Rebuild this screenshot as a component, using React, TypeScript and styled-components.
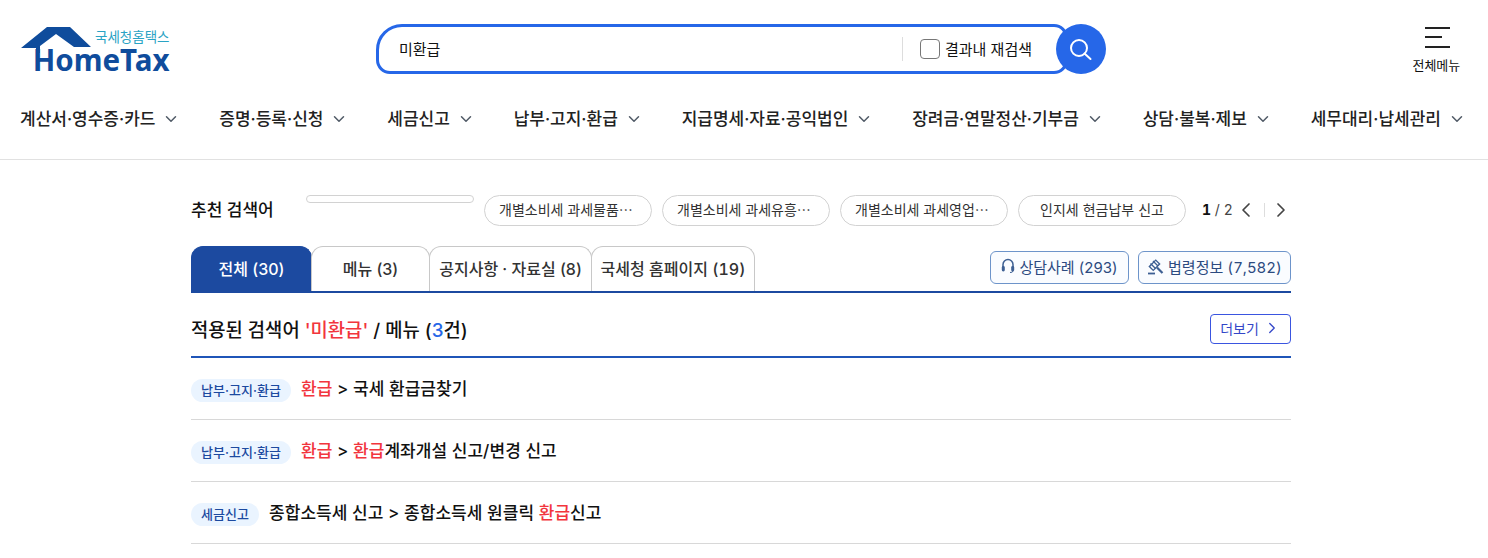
import React from "react";
import styled, { createGlobalStyle } from "styled-components";
import { ChevronDown, ChevronLeft, ChevronRight } from "lucide-react";

const GlobalStyle = createGlobalStyle`
  html, body { margin: 0; padding: 0; background: #fff; overflow: hidden; }
  body {
    font-family: Inter, "Noto Sans CJK KR", "Noto Sans", sans-serif;
    color: #111;
  }
  * { box-sizing: border-box; }
`;

const Page = styled.div`
  width: 1488px;
  height: 558px;
`;

const Header = styled.header`
  height: 160px;
  border-bottom: 1px solid #e1e1e1;
`;

const TopRow = styled.div`
  height: 107px;
  display: flex;
  align-items: flex-start;
  padding: 24px 28px 0 20px;
`;

const Logo = styled.div`
  width: 356px;
  flex: none;
`;

const LogoMark = styled.div`
  position: relative;
  width: 149.5px;
  height: 50px;
  display: flex;
  flex-direction: column;
  align-items: flex-end;
`;

const HouseIcon = styled.svg`
  position: absolute;
  left: 0;
  top: 2px;
`;

const LogoSub = styled.div`
  font-size: 13.5px;
  line-height: 16px;
  margin-top: 5px;
  color: #2aa3c4;
`;

const LogoWord = styled.div`
  font-family: "Noto Sans", sans-serif;
  font-size: 29.5px;
  font-weight: 700;
  line-height: 28px;
  margin-top: 1px;
  color: #0f4c9c;
`;

const SearchGroup = styled.div`
  display: flex;
  align-items: center;
  width: 730px;
  flex: none;
`;

const SearchBox = styled.div`
  width: 692px;
  height: 50px;
  flex: none;
  display: flex;
  align-items: center;
  border: 3px solid #2667e8;
  border-radius: 26px 14px 14px 14px;
  padding: 0 33px 0 20px;
  font-size: 15px;
`;

const SearchText = styled.div`
  flex: 1;
  padding-bottom: 2px;
`;

const Divider = styled.span`
  width: 1px;
  height: 24px;
  background: #ddd;
  margin-right: 17px;
`;

const CheckRow = styled.label`
  display: flex;
  align-items: center;
  gap: 5px;
  font-size: 15px;
`;

const CheckText = styled.span`
  padding-bottom: 2px;
`;

const Check = styled.span`
  width: 20px;
  height: 20px;
  border: 1px solid #777;
  border-radius: 4px;
`;

const SearchButton = styled.div`
  width: 50px;
  height: 50px;
  flex: none;
  margin-left: -12px;
  border-radius: 50%;
  background: #2667e8;
  display: flex;
  align-items: center;
  justify-content: center;
`;

const MenuButton = styled.div`
  margin-left: auto;
  padding-top: 3px;
  display: flex;
  flex-direction: column;
  align-items: center;
`;

const MenuIcon = styled.svg`
  margin-left: 2px;
`;

const MenuLabel = styled.div`
  font-size: 13px;
  line-height: 17px;
  margin-top: 9px;
  letter-spacing: -0.1px;
`;

const Nav = styled.nav`
  display: flex;
  justify-content: space-between;
  padding: 0 22px 0 20px;
`;

const NavItem = styled.div`
  display: flex;
  align-items: center;
  gap: 7px;
  font-size: 17px;
  font-weight: 500;
  line-height: 24px;
  height: 24px;
  color: #222;
`;

const Main = styled.main`
  width: 1100px;
  margin-left: 191px;
`;

const RecommendRow = styled.div`
  height: 86px;
  padding-top: 35px;
  display: flex;
  align-items: flex-start;
`;

const RecommendTitle = styled.div`
  width: 115px;
  flex: none;
  font-size: 17px;
  font-weight: 500;
  line-height: 31px;
`;

const EmptyPill = styled.div`
  width: 168px;
  height: 8px;
  flex: none;
  border: 1px solid #d2d2d2;
  border-radius: 4px;
  margin-right: 10px;
`;

const Pill = styled.div<{ $clipped?: boolean }>`
  width: 168px;
  height: 31px;
  flex: none;
  margin-right: 10px;
  border: 1px solid #d2d2d2;
  border-radius: 16px;
  padding: 0 14px;
  font-size: 14px;
  line-height: 28px;
  text-align: ${(p) => (p.$clipped ? "left" : "center")};
  color: #333;
  white-space: nowrap;
`;

const Pager = styled.div`
  flex: none;
  display: flex;
  align-items: center;
  height: 29px;
  margin-left: 6px;
  font-size: 14px;
  color: #444;
  white-space: nowrap;
`;

const PagerCount = styled.span`
  width: 30px;
  flex: none;
  font-variant-numeric: tabular-nums;
`;

const PagerCurrent = styled.b`
  font-weight: 700;
  color: #111;
`;

const PagerLine = styled.span`
  width: 1px;
  height: 14px;
  background: #ddd;
  margin-left: 6px;
`;

const PagerArrow = styled.span<{ $gap: number }>`
  display: flex;
  margin-left: ${(p) => p.$gap}px;
  color: #444;
`;

const TabBar = styled.div`
  height: 47px;
  display: flex;
  align-items: flex-start;
  border-bottom: 2px solid #1c4aa0;
`;

const Tab = styled.div<{ $active?: boolean; $w: number }>`
  width: ${(p) => p.$w}px;
  height: 45px;
  flex: none;
  margin-right: -1px;
  padding-bottom: 2px;
  display: flex;
  align-items: center;
  justify-content: center;
  border: 1px solid ${(p) => (p.$active ? "#1c4aa0" : "#c8c8c8")};
  border-bottom: 0;
  border-radius: 12px 12px 0 0;
  background: ${(p) => (p.$active ? "#1c4aa0" : "#fff")};
  color: ${(p) => (p.$active ? "#fff" : "#333")};
  font-size: 16px;
  font-weight: 500;
  white-space: nowrap;
`;

const Count = styled.span`
  font-variant-numeric: tabular-nums;
`;

const TabButtons = styled.div`
  margin-left: auto;
  padding-top: 5px;
  display: flex;
  gap: 9px;
`;

const OutlineButton = styled.div<{ $w: number }>`
  width: ${(p) => p.$w}px;
  height: 33px;
  padding-bottom: 3px;
  display: flex;
  align-items: center;
  justify-content: center;
  gap: 4px;
  border: 1px solid #6d94ca;
  border-radius: 6px;
  background: #fafcff;
  color: #2c4a80;
  font-size: 15px;
`;

const ResultHead = styled.div`
  height: 65px;
  display: flex;
  align-items: center;
  justify-content: space-between;
  border-bottom: 2px solid #1f55b8;
  padding-top: 19px;
  padding-bottom: 10px;
`;

const ResultTitle = styled.h2`
  margin: 0 0 2px;
  font-size: 18.8px;
  font-weight: 500;
  color: #111;
`;

const Red = styled.span`
  color: #f2353d;
`;

const Blue = styled.span`
  color: #2667e8;
`;

const MoreButton = styled.div`
  width: 81px;
  height: 30px;
  padding-bottom: 2px;
  display: flex;
  align-items: center;
  justify-content: center;
  gap: 4px;
  border: 1px solid #3a55e0;
  border-radius: 4px;
  color: #3346c8;
  font-size: 14px;
`;

const Row = styled.div`
  height: 62px;
  display: flex;
  align-items: center;
  gap: 10px;
  border-bottom: 1px solid #d8d8d8;
  font-size: 17px;
  font-weight: 500;
  letter-spacing: 0.05px;
  color: #111;
`;

const RowText = styled.span`
  margin-bottom: 2px;
`;

const Badge = styled.span`
  height: 23px;
  margin-top: 4px;
  padding: 0 10px;
  border-radius: 12px;
  background: #eaf4ff;
  color: #1c4aa0;
  font-size: 13px;
  font-weight: 500;
  line-height: 23px;
`;

const navItems = [
  "계산서·영수증·카드",
  "증명·등록·신청",
  "세금신고",
  "납부·고지·환급",
  "지급명세·자료·공익법인",
  "장려금·연말정산·기부금",
  "상담·불복·제보",
  "세무대리·납세관리",
];

const pills = [
  { label: "개별소비세 과세물품⋯", clipped: true },
  { label: "개별소비세 과세유흥⋯", clipped: true },
  { label: "개별소비세 과세영업⋯", clipped: true },
  { label: "인지세 현금납부 신고", clipped: false },
];

function HeadsetIcon() {
  return (
    <svg width="14" height="16" viewBox="0 0 14 16" fill="none">
      <path d="M2 9 V6.5 a5 5 0 0 1 10 0 V9" stroke="#3d5f93" strokeWidth="1.5" />
      <rect x="0.8" y="8" width="3" height="5.5" rx="1.4" fill="#3d5f93" />
      <rect x="10.2" y="8" width="3" height="5.5" rx="1.4" fill="#3d5f93" />
      <path d="M12 13 q0 1.5 -3 1.5" stroke="#3d5f93" strokeWidth="1" />
    </svg>
  );
}

function GavelIcon() {
  return (
    <svg width="17" height="17" viewBox="0 0 17 17" fill="none">
      <g stroke="#3d5f93" strokeWidth="1.4">
        <rect x="3" y="4.5" width="9" height="5.5" transform="rotate(-45 7.5 7.25)" fill="#fff" />
        <path d="M3.5 5.5 L8.5 10.5 M6 3 L11 8" />
      </g>
      <path d="M10 9.5 L15.5 15" stroke="#3d5f93" strokeWidth="2.2" />
      <path d="M1 15.5 H8" stroke="#3d5f93" strokeWidth="1.8" />
    </svg>
  );
}

export default function App() {
  return (
    <Page>
      <GlobalStyle />
      <Header>
        <TopRow>
          <Logo>
            <LogoMark>
              <HouseIcon width="75" height="30" viewBox="0 0 75 30">
                <path d="M27 1 H50 L71 21 H54 L36 8 L20 20 V27 H16 V22 H1 Z" fill="#0f4c9c" />
              </HouseIcon>
              <LogoSub>국세청홈택스</LogoSub>
              <LogoWord>HomeTax</LogoWord>
            </LogoMark>
          </Logo>
          <SearchGroup>
            <SearchBox>
              <SearchText>미환급</SearchText>
              <Divider />
              <CheckRow>
                <Check />
                <CheckText>결과내 재검색</CheckText>
              </CheckRow>
            </SearchBox>
            <SearchButton>
              <svg width="24" height="24" viewBox="0 0 24 24" fill="none" stroke="#fff" strokeWidth="2">
                <circle cx="10" cy="11" r="8" />
                <path d="M15.5 16.5 L21.5 22" strokeLinecap="round" />
              </svg>
            </SearchButton>
          </SearchGroup>
          <MenuButton>
            <MenuIcon width="25" height="21" viewBox="0 0 25 21" fill="#222">
              <rect x="0" y="0" width="25" height="2" />
              <rect x="0" y="9" width="17" height="2" />
              <rect x="0" y="19" width="25" height="2" />
            </MenuIcon>
            <MenuLabel>전체메뉴</MenuLabel>
          </MenuButton>
        </TopRow>
        <Nav>
          {navItems.map((n) => (
            <NavItem key={n}>
              {n}
              <ChevronDown size={18} color="#505a66" />
            </NavItem>
          ))}
        </Nav>
      </Header>
      <Main>
        <RecommendRow>
          <RecommendTitle>추천 검색어</RecommendTitle>
          <EmptyPill />
          {pills.map((p) => (
            <Pill key={p.label} $clipped={p.clipped}>{p.label}</Pill>
          ))}
          <Pager>
            <PagerCount><PagerCurrent>1</PagerCurrent> / 2</PagerCount>
            <PagerArrow $gap={2}><ChevronLeft size={24} strokeWidth={1.7} /></PagerArrow>
            <PagerLine />
            <PagerArrow $gap={4}><ChevronRight size={24} strokeWidth={1.7} /></PagerArrow>
          </Pager>
        </RecommendRow>
        <TabBar>
          <Tab $active $w={121}>전체 (30)</Tab>
          <Tab $w={119}>메뉴 (3)</Tab>
          <Tab $w={163}>공지사항 · 자료실 (8)</Tab>
          <Tab $w={164}><Count>국세청 홈페이지 (19)</Count></Tab>
          <TabButtons>
            <OutlineButton $w={139}>
              <HeadsetIcon />
              상담사례 (293)
            </OutlineButton>
            <OutlineButton $w={153}>
              <GavelIcon />
              <Count>법령정보 (7,582)</Count>
            </OutlineButton>
          </TabButtons>
        </TabBar>
        <ResultHead>
          <ResultTitle>
            적용된 검색어 <Red>'미환급'</Red> / 메뉴 (<Blue>3</Blue>건)
          </ResultTitle>
          <MoreButton>
            더보기
            <ChevronRight size={18} strokeWidth={1.7} />
          </MoreButton>
        </ResultHead>
        <Row>
          <Badge>납부·고지·환급</Badge>
          <RowText><Red>환급</Red> &gt; 국세 환급금찾기</RowText>
        </Row>
        <Row>
          <Badge>납부·고지·환급</Badge>
          <RowText><Red>환급</Red> &gt; <Red>환급</Red>계좌개설 신고/변경 신고</RowText>
        </Row>
        <Row>
          <Badge>세금신고</Badge>
          <RowText>종합소득세 신고 &gt; 종합소득세 원클릭 <Red>환급</Red>신고</RowText>
        </Row>
      </Main>
    </Page>
  );
}
